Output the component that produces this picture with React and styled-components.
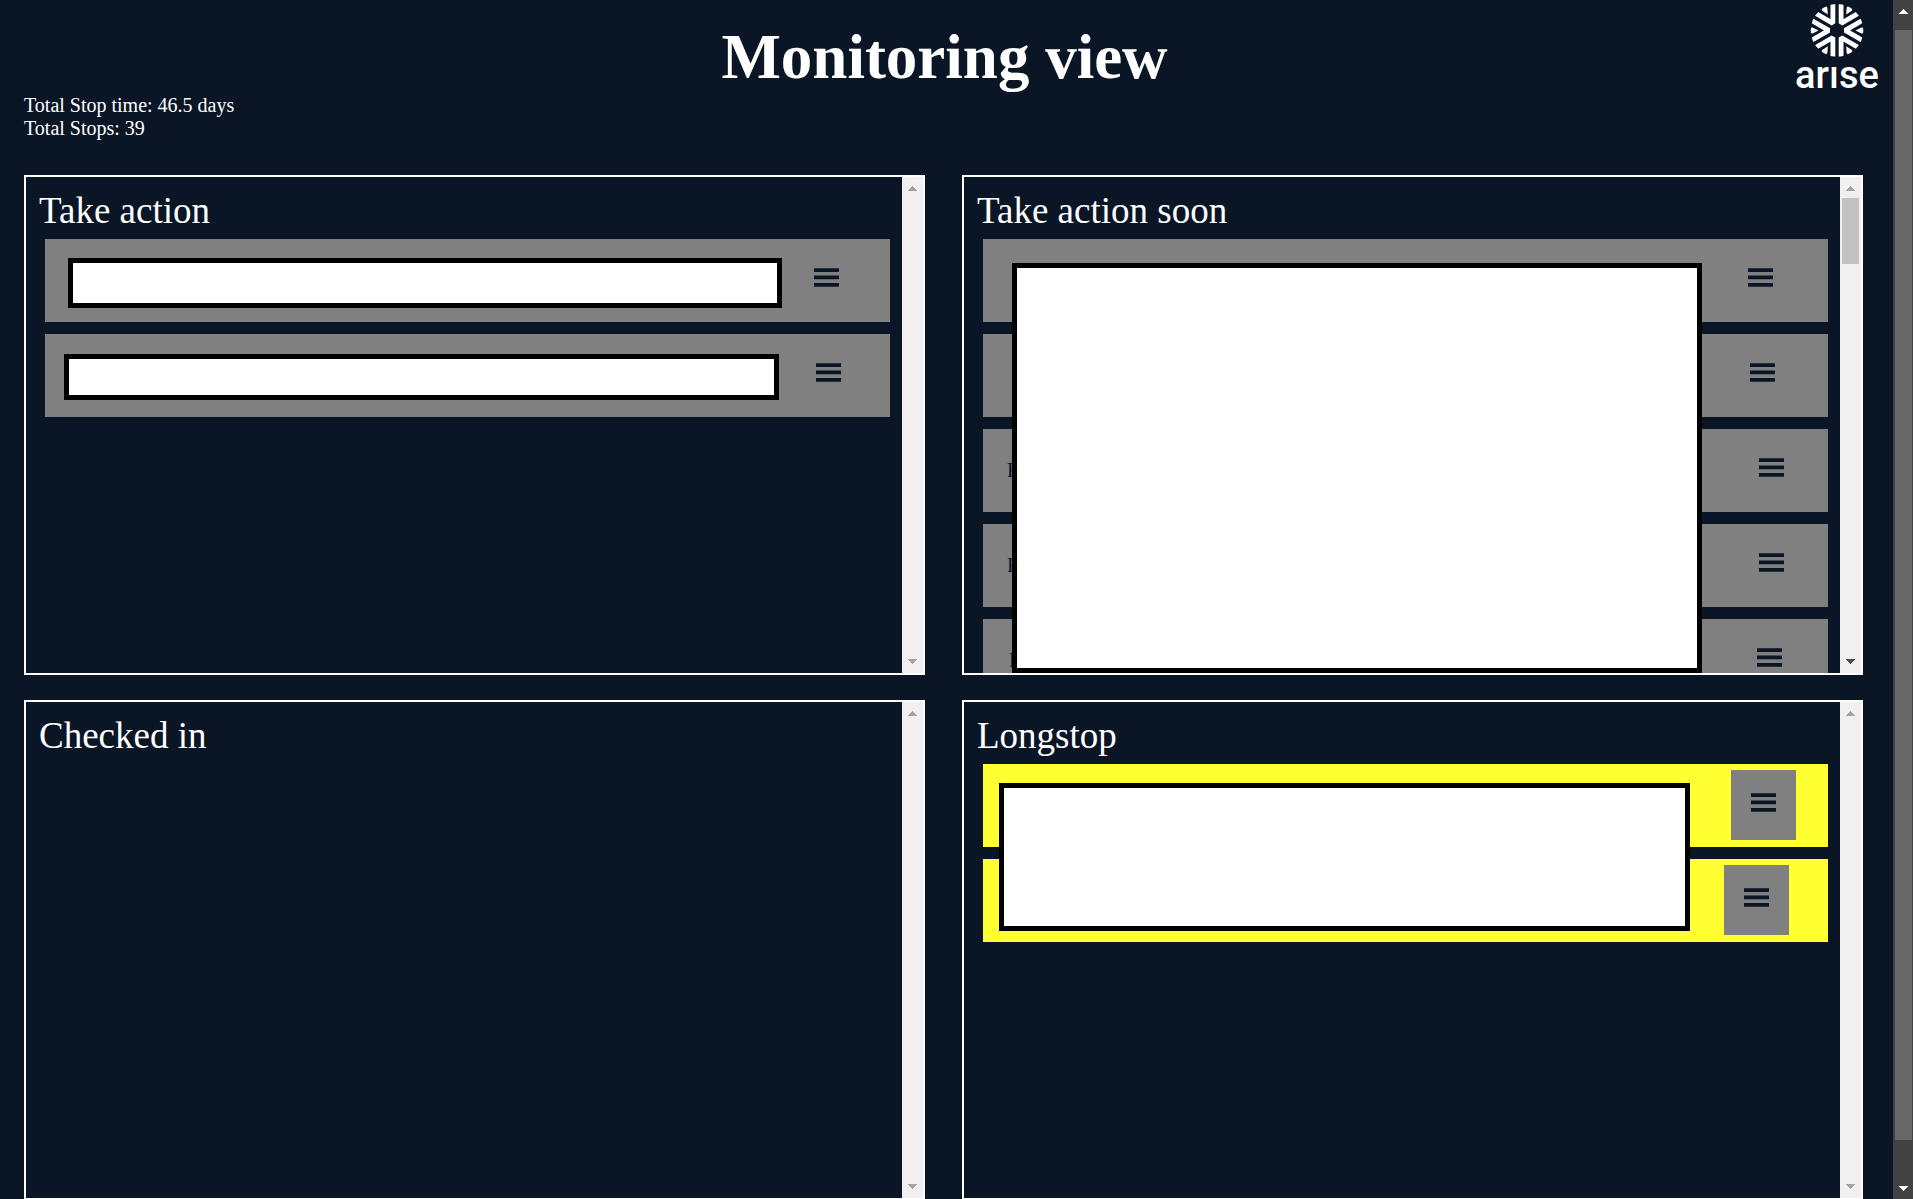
import React from "react";
import styled, { createGlobalStyle } from "styled-components";

const navy = "#0a1525";

const GlobalStyle = createGlobalStyle`
  body {
    margin: 0;
    background: ${navy};
    color: #fff;
    font-family: "Liberation Serif", "Times New Roman", serif;
    font-size: 20px;
    line-height: 23px;
  }
`;

const Shell = styled.div`
  display: flex;
  height: 100vh;
  overflow: hidden;
`;

const Page = styled.main`
  flex: 1;
  min-width: 0;
`;

const Header = styled.header`
  display: grid;
  grid-template-columns: 1fr auto 1fr;
  align-items: start;
  box-sizing: border-box;
  height: 94px;
  padding: 0 14px 0 10px;
`;

const Title = styled.h1`
  grid-column: 2;
  margin: 0;
  padding-top: 21px;
  font-size: 63px;
  line-height: 72px;
  font-weight: bold;
`;

const LogoSvg = styled.svg`
  display: block;
  justify-self: end;
  width: 84px;
  height: 93px;
`;

const Stats = styled.section`
  padding: 0 24px;
  margin-bottom: 35px;
`;

const Stat = styled.div``;

const Board = styled.div`
  display: grid;
  grid-template-columns: 1fr 1fr;
  grid-auto-rows: 500px;
  gap: 25px 37px;
  padding: 0 30px 0 24px;
`;

const PanelFrame = styled.section`
  display: flex;
  min-width: 0;
  border: 2px solid #fff;
  overflow: hidden;
  box-sizing: border-box;
`;

const PanelBody = styled.div`
  flex: 1;
  min-width: 0;
  overflow: hidden;
`;

const PanelTitle = styled.h2`
  box-sizing: border-box;
  height: 62px;
  margin: 0;
  padding: 12px 13px 0;
  font-size: 37px;
  line-height: 44px;
  font-weight: normal;
`;

const List = styled.div`
  position: relative;
  display: flex;
  flex-direction: column;
  gap: 12px;
  margin: 0 12px 0 19px;
`;

const Row = styled.div`
  display: flex;
  justify-content: center;
  align-items: center;
  box-sizing: border-box;
  height: 83px;
  background: ${(p) => (p.$alert ? "#ffff31" : "#808080")};
  color: ${navy};
`;

const RowText = styled.span`
  width: ${(p) => p.$width}px;
`;

const MenuButton = styled.button`
  flex: none;
  width: 65px;
  height: 70px;
  margin-bottom: 1px;
  padding: 23px 20px 28px;
  border: 0;
  background: #808080;
  color: ${navy};
  cursor: pointer;
`;

const MenuSvg = styled.svg`
  display: block;
  width: 25px;
  height: 19px;
`;

const Cover = styled.div`
  position: absolute;
  box-sizing: border-box;
  top: ${(p) => p.$top}px;
  left: ${(p) => p.$left}px;
  right: ${(p) => p.$right}px;
  height: ${(p) => p.$height}px;
  background: #fff;
  border: 5px solid #000;
`;

const Track = styled.div`
  flex: none;
  display: flex;
  flex-direction: column;
  width: ${(p) => (p.$dark ? 20 : 21)}px;
  background: ${(p) => (p.$dark ? "#424242" : "#f0f0f0")};
`;

const ArrowButton = styled.button`
  flex: none;
  display: flex;
  justify-content: center;
  align-items: ${(p) => (p.$down ? "flex-end" : "flex-start")};
  height: 21px;
  padding: ${(p) => (p.$dark && p.$down ? "8px 0" : "9px 0")};
  border: 0;
  background: transparent;
  color: ${(p) => p.$tone};
`;

const ArrowSvg = styled.svg`
  display: block;
  width: 9px;
  height: 5px;
`;

const ThumbArea = styled.div`
  flex: 1;
  display: flex;
  flex-direction: column;
  box-sizing: border-box;
  padding: ${(p) => (p.$dark ? "9px 1px 38px 2px" : "0 2px")};
`;

const Thumb = styled.div`
  height: ${(p) => p.$height};
  background: ${(p) => (p.$dark ? "#686868" : "#c1c1c1")};
`;

function Arrow({ down, tone, dark }) {
  return (
    <ArrowButton
      type="button"
      $down={down}
      $tone={tone}
      $dark={dark}
      aria-label={down ? "Scroll down" : "Scroll up"}
    >
      <ArrowSvg viewBox="0 0 9 5" aria-hidden="true" shapeRendering="crispEdges">
        <path fill="currentColor" d={down ? "M0 0H9L4.5 5Z" : "M0 5H9L4.5 0Z"} />
      </ArrowSvg>
    </ArrowButton>
  );
}

function Scrollbar({ dark, thumb, canScroll }) {
  const idle = dark ? "#fff" : "#a3a3a3";
  const active = dark ? "#fff" : "#505050";
  return (
    <Track $dark={dark}>
      <Arrow tone={idle} dark={dark} />
      <ThumbArea $dark={dark}>{thumb && <Thumb $dark={dark} $height={thumb} />}</ThumbArea>
      <Arrow down tone={canScroll ? active : idle} dark={dark} />
    </Track>
  );
}

const spokes = [0, 60, 120, 180, 240, 300];

function Logo() {
  return (
    <LogoSvg viewBox="0 0 84 93" role="img" aria-label="arise">
      <defs>
        <clipPath id="emblem">
          <circle r="26.3" />
        </clipPath>
      </defs>
      <g transform="translate(42 30.4)">
        <g clipPath="url(#emblem)">
          {spokes.map((angle) => (
            <g key={angle} transform={`rotate(${angle})`}>
              <path
                d="M34.2 -15L8.2 0L34.2 15"
                fill="none"
                stroke="#fff"
                strokeWidth="4.8"
                strokeLinejoin="bevel"
              />
              <path d="M18.4 0L24.5 -3L27 -2.6V2.6L24.5 3Z" fill="#fff" />
            </g>
          ))}
        </g>
      </g>
      <text
        x="42"
        y="88"
        textAnchor="middle"
        fill="#fff"
        fontFamily="Roboto, sans-serif"
        fontSize="38"
        fontWeight="500"
      >
        arıse
      </text>
    </LogoSvg>
  );
}

function MenuIcon() {
  return (
    <MenuSvg viewBox="0 0 25 19" aria-hidden="true">
      <path
        fill="currentColor"
        d="M0 .25H25V4H0ZM0 7.5H25V11.25H0ZM0 15H25V18.75H0Z"
      />
    </MenuSvg>
  );
}

const panels = [
  {
    title: "Take action",
    rows: [{ width: 718 }, { width: 722 }],
    covers: [
      { top: 19, left: 23, right: 108, height: 50 },
      { top: 115, left: 19, right: 111, height: 46 },
    ],
  },
  {
    title: "Take action soon",
    thumb: "66px",
    rows: [
      { width: 710 },
      { width: 714 },
      { width: 732, text: "F" },
      { width: 732, text: "F" },
      { width: 728, text: "F" },
    ],
    covers: [{ top: 24, left: 29, right: 126, height: 410 }],
  },
  { title: "Checked in", rows: [], covers: [] },
  {
    title: "Longstop",
    alert: true,
    rows: [{ width: 716 }, { width: 702 }],
    covers: [{ top: 19, left: 16, right: 138, height: 148 }],
  },
];

function Panel({ title, rows, covers, alert, thumb }) {
  return (
    <PanelFrame>
      <PanelBody>
        <PanelTitle>{title}</PanelTitle>
        <List>
          {rows.map((row, i) => (
            <Row key={i} $alert={alert}>
              <RowText $width={row.width}>{row.text}</RowText>
              <MenuButton type="button" aria-label="Open menu">
                <MenuIcon />
              </MenuButton>
            </Row>
          ))}
          {covers.map((c, i) => (
            <Cover key={i} $top={c.top} $left={c.left} $right={c.right} $height={c.height} />
          ))}
        </List>
      </PanelBody>
      <Scrollbar thumb={thumb} canScroll={Boolean(thumb)} />
    </PanelFrame>
  );
}

export default function App() {
  return (
    <>
      <GlobalStyle />
      <Shell>
        <Page>
          <Header>
            <Title>Monitoring view</Title>
            <Logo />
          </Header>
          <Stats>
            <Stat>Total Stop time: 46.5 days</Stat>
            <Stat>Total Stops: 39</Stat>
          </Stats>
          <Board>
            {panels.map((panel) => (
              <Panel key={panel.title} {...panel} />
            ))}
          </Board>
        </Page>
        <Scrollbar dark thumb="100%" canScroll />
      </Shell>
    </>
  );
}
